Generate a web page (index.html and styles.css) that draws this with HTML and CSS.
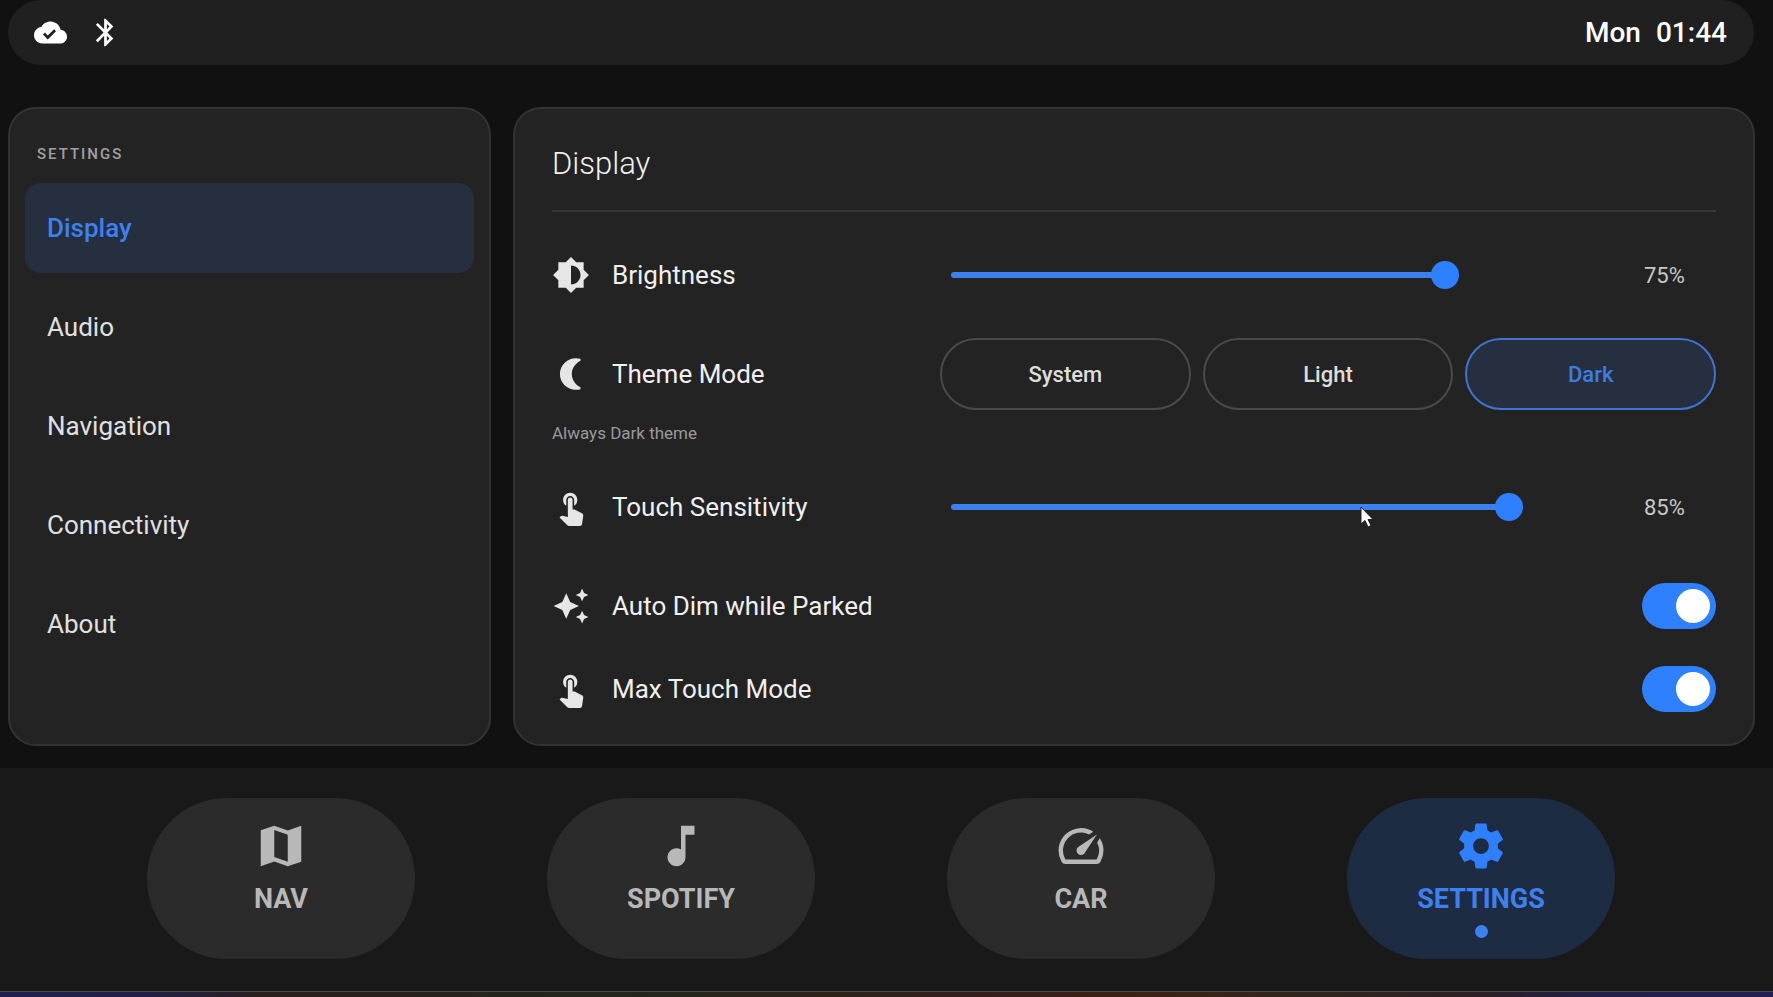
FILE: index.html
```html
<!DOCTYPE html>
<html lang="en">
<head>
    <meta charset="UTF-8">
    <meta name="viewport" content="width=device-width, initial-scale=1.0">
    <title>Display Settings</title>
    <link rel="stylesheet" href="styles.css">
</head>
<body>
    <header class="status-bar">
        <div class="status-icons">
            <svg class="status-icon" viewBox="0 0 24 24" role="img" aria-label="Cloud synced"><path d="M19.35 10.04C18.67 6.59 15.64 4 12 4 9.11 4 6.6 5.64 5.35 8.04 2.34 8.36 0 10.91 0 14c0 3.31 2.69 6 6 6h13c2.76 0 5-2.24 5-5 0-2.64-2.05-4.78-4.65-4.96zM10 17l-3.5-3.500 1.410-1.410L10 14.170l4.600-4.600L16 11l-6 6z"/></svg>
            <svg class="status-icon" viewBox="0 0 24 24" role="img" aria-label="Bluetooth"><path d="M17.710 7.710L12 2h-1v7.590L6.410 5 5 6.410 10.590 12 5 17.590 6.410 19 11 14.410V22h1l5.710-5.710-4.300-4.290 4.300-4.290zM13 5.830l1.880 1.880L13 9.590V5.830zm1.880 10.460L13 18.170v-3.760l1.880 1.880z"/></svg>
        </div>
        <div class="clock"><span>Mon</span><time>01:44</time></div>
    </header>

    <main class="content">
        <aside class="panel sidebar">
            <h2 class="sidebar-title">SETTINGS</h2>
            <nav class="menu">
                <a href="#display" class="menu-item active">Display</a>
                <a href="#audio" class="menu-item">Audio</a>
                <a href="#navigation" class="menu-item">Navigation</a>
                <a href="#connectivity" class="menu-item">Connectivity</a>
                <a href="#about" class="menu-item">About</a>
            </nav>
        </aside>

        <section class="panel detail" id="display">
            <h1 class="detail-title">Display</h1>

            <div class="row">
                <label class="row-label" for="brightness">
                    <svg class="row-icon" viewBox="0 0 24 24"><path d="M20 15.310L23.310 12 20 8.690V4h-4.690L12 .690 8.690 4H4v4.690L.690 12 4 15.310V20h4.690L12 23.310 15.310 20H20v-4.690zM12 18V6c3.310 0 6 2.690 6 6s-2.690 6-6 6z"/></svg>
                    Brightness
                </label>
                <div class="row-slider">
                    <input type="range" id="brightness" class="slider slider-brightness" min="0" max="100" value="75">
                    <output class="value" for="brightness">75%</output>
                </div>
            </div>

            <div class="row">
                <span class="row-label" id="themeLabel">
                    <svg class="row-icon" viewBox="0 0 24 24"><path d="M15 2c1 0 2 .1 3 .4v1.200c-3.300 1.700-5.500 4.800-5.500 8.400s2.200 6.700 5.500 8.400v1.200c-1 .3-2 .4-3 .4C9.500 22 5 17.500 5 12S9.500 2 15 2z"/></svg>
                    Theme Mode
                </span>
                <div class="theme-buttons" role="group" aria-labelledby="themeLabel">
                    <button type="button" class="theme-button" aria-pressed="false">System</button>
                    <button type="button" class="theme-button" aria-pressed="false">Light</button>
                    <button type="button" class="theme-button selected" aria-pressed="true">Dark</button>
                </div>
            </div>
            <p class="hint">Always Dark theme</p>

            <div class="row">
                <label class="row-label" for="touch">
                    <svg class="row-icon" viewBox="0 0 24 24"><path d="M9 11.240V7.500C9 6.120 10.120 5 11.500 5S14 6.120 14 7.500v3.740c1.210-.81 2-2.180 2-3.740C16 5.010 13.990 3 11.500 3S7 5.010 7 7.500c0 1.560.79 2.930 2 3.740zm9.840 4.630l-4.540-2.260c-.17-.07-.35-.11-.54-.11H13v-6c0-.83-.67-1.500-1.500-1.500S10 6.670 10 7.500v10.740l-3.430-.72c-.08-.01-.15-.03-.24-.03-.31 0-.59.13-.79.33l-.79.8 4.940 4.940c.27.27.65.44 1.060.44h6.790c.75 0 1.330-.55 1.440-1.280l.75-5.270c.01-.07.02-.14.02-.2 0-.62-.38-1.160-.91-1.380z"/></svg>
                    Touch Sensitivity
                </label>
                <div class="row-slider">
                    <input type="range" id="touch" class="slider slider-touch" min="0" max="100" value="85">
                    <output class="value" for="touch">85%</output>
                </div>
            </div>

            <div class="toggles">
                <div class="row toggle-row">
                    <label class="row-label" for="autoDim">
                        <svg class="row-icon" viewBox="0 0 24 24"><path d="M19 9l1.250-2.750L23 5l-2.750-1.250L19 1l-1.250 2.750L15 5l2.750 1.250L19 9zm-7.500.5L9 4 6.500 9.500 1 12l5.500 2.500L9 20l2.500-5.500L17 12l-5.500-2.500zM19 15l-1.250 2.750L15 19l2.750 1.250L19 23l1.250-2.750L23 19l-2.750-1.250L19 15z"/></svg>
                        Auto Dim while Parked
                    </label>
                    <input type="checkbox" id="autoDim" class="toggle" role="switch" checked>
                </div>
                <div class="row toggle-row">
                    <label class="row-label" for="maxTouch">
                        <svg class="row-icon" viewBox="0 0 24 24"><path d="M9 11.240V7.500C9 6.120 10.120 5 11.500 5S14 6.120 14 7.500v3.740c1.210-.81 2-2.180 2-3.740C16 5.010 13.990 3 11.500 3S7 5.010 7 7.500c0 1.560.79 2.930 2 3.740zm9.840 4.630l-4.540-2.260c-.17-.07-.35-.11-.54-.11H13v-6c0-.83-.67-1.500-1.500-1.500S10 6.670 10 7.500v10.740l-3.430-.72c-.08-.01-.15-.03-.24-.03-.31 0-.59.13-.79.33l-.79.8 4.940 4.940c.27.27.65.44 1.060.44h6.790c.75 0 1.330-.55 1.440-1.280l.75-5.270c.01-.07.02-.14.02-.2 0-.62-.38-1.160-.91-1.380z"/></svg>
                        Max Touch Mode
                    </label>
                    <input type="checkbox" id="maxTouch" class="toggle" role="switch" checked>
                </div>
            </div>
        </section>
    </main>

    <nav class="dock">
        <button type="button" class="dock-button">
            <svg class="dock-icon" viewBox="0 0 24 24"><path fill-rule="evenodd" d="M3 5l6-2 6 2.100L21 3v16l-6 2-6-2.100L3 21zM9 4.900v12l6 2.100V7z"/></svg>
            NAV
        </button>
        <button type="button" class="dock-button">
            <svg class="dock-icon" viewBox="0 0 24 24"><path d="M12 3v10.550c-.59-.34-1.270-.55-2-.55-2.210 0-4 1.790-4 4s1.790 4 4 4 4-1.790 4-4V7h4V3h-6z"/></svg>
            SPOTIFY
        </button>
        <button type="button" class="dock-button">
            <svg class="dock-icon" viewBox="0 0 24 24"><path d="M20.380 8.570l-1.230 1.850a8 8 0 0 1-.22 7.580H5.070A8 8 0 0 1 15.580 6.850l1.850-1.230A10 10 0 0 0 3.350 19a2 2 0 0 0 1.720 1h13.850a2 2 0 0 0 1.740-1 10 10 0 0 0-.27-10.440zm-9.790 6.840a2 2 0 0 0 2.830 0l5.660-8.490-8.490 5.660a2 2 0 0 0 0 2.830z"/></svg>
            CAR
        </button>
        <button type="button" class="dock-button current" aria-current="page">
            <svg class="dock-icon" viewBox="0 0 24 24"><path d="M19.430 12.980c.04-.32.07-.64.07-.98s-.03-.66-.07-.98l2.110-1.650c.19-.15.24-.42.12-.64l-2-3.460c-.12-.22-.39-.3-.61-.22l-2.490 1c-.52-.4-1.080-.73-1.690-.98l-.38-2.650C14.460 2.180 14.250 2 14 2h-4c-.25 0-.46.18-.49.42l-.38 2.650c-.61.25-1.170.59-1.690.98l-2.490-1c-.23-.09-.49 0-.61.22l-2 3.460c-.13.22-.07.49.12.64l2.110 1.650c-.04.32-.07.65-.07.98s.03.66.07.98l-2.110 1.650c-.19.15-.24.42-.12.64l2 3.460c.12.22.39.3.61.22l2.490-1c.52.4 1.080.73 1.690.98l.38 2.650c.03.24.24.42.49.42h4c.25 0 .46-.18.49-.42l.38-2.650c.61-.25 1.170-.59 1.690-.98l2.490 1c.23.09.49 0 .61-.22l2-3.460c.12-.22.07-.49-.12-.64l-2.110-1.650zM12 15.500c-1.930 0-3.500-1.570-3.500-3.500s1.570-3.500 3.500-3.500 3.500 1.570 3.500 3.500-1.570 3.500-3.500 3.500z"/></svg>
            SETTINGS
        </button>
    </nav>
    <div class="edge-strip"></div>

    <svg class="cursor" viewBox="0 0 14 22" aria-hidden="true"><path d="M1 1v17l4-3.500 3 6.500 3-1.500-3-6h5z"/></svg>
</body>
</html>
```

FILE: styles.css
```css
* {
    box-sizing: border-box;
}

body {
    margin: 0;
    min-height: 100vh;
    display: flex;
    flex-direction: column;
    position: relative;
    background-color: #111111;
    color: #f0f0f0;
    font-family: Roboto, "Liberation Sans", sans-serif;
}

svg {
    fill: currentColor;
    flex-shrink: 0;
}

/* status bar */
.status-bar {
    display: flex;
    justify-content: space-between;
    align-items: center;
    height: 65px;
    margin: 0 19px 0 8px;
    padding: 0 27px 0 26px;
    border-radius: 33px;
    background-color: #202020;
    color: #ffffff;
}

.status-icons {
    display: flex;
    gap: 22px;
}

.status-icon {
    width: 33px;
    height: 33px;
}

.clock {
    display: flex;
    gap: 15px;
    font-size: 28px;
    font-weight: 500;
}

/* panels */
.content {
    flex: 1;
    display: grid;
    grid-template-columns: 7fr 18fr;
    gap: 22px;
    margin: 42px 18px 22px 8px;
}

.panel {
    border: 2px solid #333333;
    border-radius: 28px;
    background-color: #232323;
}

.sidebar {
    padding: 35px 15px;
}

.sidebar-title {
    margin: 0 0 19px;
    padding-left: 12px;
    font-size: 15px;
    line-height: 20px;
    font-weight: 500;
    letter-spacing: 2px;
    color: #a0a0a0;
}

.menu {
    display: flex;
    flex-direction: column;
    gap: 9px;
}

.menu-item {
    padding: 0 22px;
    border-radius: 16px;
    font-size: 26px;
    line-height: 90px;
    color: #e0e0e0;
    text-decoration: none;
}

.menu-item.active {
    background-color: #252f40;
    color: #3d80f0;
    font-weight: 500;
}

.detail {
    padding: 35px 37px 18px;
}

.detail-title {
    margin: 0 0 27px;
    padding-bottom: 26px;
    border-bottom: 2px solid #373737;
    font-size: 31px;
    line-height: 40px;
    font-weight: 300;
}

/* setting rows */
.row {
    display: grid;
    grid-template-columns: 1fr 2fr;
    align-items: center;
    min-height: 72px;
    margin-bottom: 27px;
}

.row-label {
    display: flex;
    align-items: center;
    gap: 22px;
    font-size: 26px;
}

.row-icon {
    width: 38px;
    height: 38px;
    color: #e6e6e6;
}

.row-slider {
    display: flex;
    align-items: center;
    gap: 25px;
    padding-left: 11px;
}

.slider {
    appearance: none;
    flex: 1;
    min-width: 0;
    height: 28px;
    margin: 0;
    background: none;
}

.slider::-webkit-slider-runnable-track {
    height: 6px;
    border-radius: 3px;
}

.slider-brightness::-webkit-slider-runnable-track {
    background: linear-gradient(to right, #3d80f0 75%, transparent 75%);
}

.slider-touch::-webkit-slider-runnable-track {
    background: linear-gradient(to right, #3d80f0 85%, transparent 85%);
}

.slider::-webkit-slider-thumb {
    appearance: none;
    width: 28px;
    height: 28px;
    margin-top: -11px;
    border-radius: 50%;
    background-color: #2f80ff;
}

.value {
    width: 72px;
    font-size: 22px;
    color: #c8c8c8;
}

.theme-buttons {
    display: grid;
    grid-template-columns: repeat(3, 1fr);
    gap: 12px;
}

.theme-button {
    height: 72px;
    border: 2px solid #4a4a4a;
    border-radius: 36px;
    background: none;
    color: #dddddd;
    font-family: inherit;
    font-size: 22px;
    font-weight: 500;
    cursor: pointer;
}

.theme-button.selected {
    border-color: #3f74d0;
    background-color: #252f40;
    color: #3f7de0;
}

.hint {
    margin: -16px 0 26px;
    font-size: 17px;
    line-height: 24px;
    color: #9a9a9a;
}

.toggle-row {
    grid-template-columns: 1fr auto;
    margin-bottom: 11px;
}

.toggle-row:last-child {
    margin-bottom: 0;
}

.toggle {
    appearance: none;
    display: flex;
    align-items: center;
    width: 74px;
    height: 46px;
    margin: 0;
    padding: 0 6px;
    border-radius: 23px;
    background-color: #444444;
    cursor: pointer;
}

.toggle::before {
    content: "";
    width: 34px;
    height: 34px;
    border-radius: 50%;
    background-color: #ffffff;
}

.toggle:checked {
    justify-content: flex-end;
    background-color: #2f80ff;
}

/* bottom dock */
.dock {
    display: flex;
    justify-content: space-between;
    padding: 30px 158px 32px 147px;
    background-color: #191919;
}

.dock-button {
    display: flex;
    flex-direction: column;
    align-items: center;
    gap: 10px;
    width: 268px;
    height: 161px;
    padding: 21px 0 0;
    border: none;
    border-radius: 80px;
    background-color: #2b2b2b;
    color: #b8b8b8;
    font-family: inherit;
    font-size: 27px;
    line-height: 32px;
    font-weight: 700;
    cursor: pointer;
}

.dock-icon {
    width: 54px;
    height: 54px;
}

.dock-button.current {
    background-color: #1e2c43;
    color: #3d80f0;
}

.dock-button.current .dock-icon {
    color: #2f80ff;
}

.dock-button.current::after {
    content: "";
    width: 13px;
    height: 13px;
    border-radius: 50%;
    background-color: #3d80f0;
}

.edge-strip {
    height: 6px;
    border-top: 1px solid #4a4a48;
    background: linear-gradient(to right, #211f50 0%, #211f48 8%, #291f1c 15%, #24241c 35%, #2c2218 48%, #331d1d 54%, #3d2013 64%, #2f251c 74%, #2a2026 84%, #231f4a 90%, #231f55 100%);
}

/* mouse pointer */
.cursor {
    position: absolute;
    top: 506px;
    left: 1360px;
    width: 14px;
    height: 22px;
    fill: #ffffff;
    stroke: #222222;
    stroke-width: 1px;
    pointer-events: none;
}
```
